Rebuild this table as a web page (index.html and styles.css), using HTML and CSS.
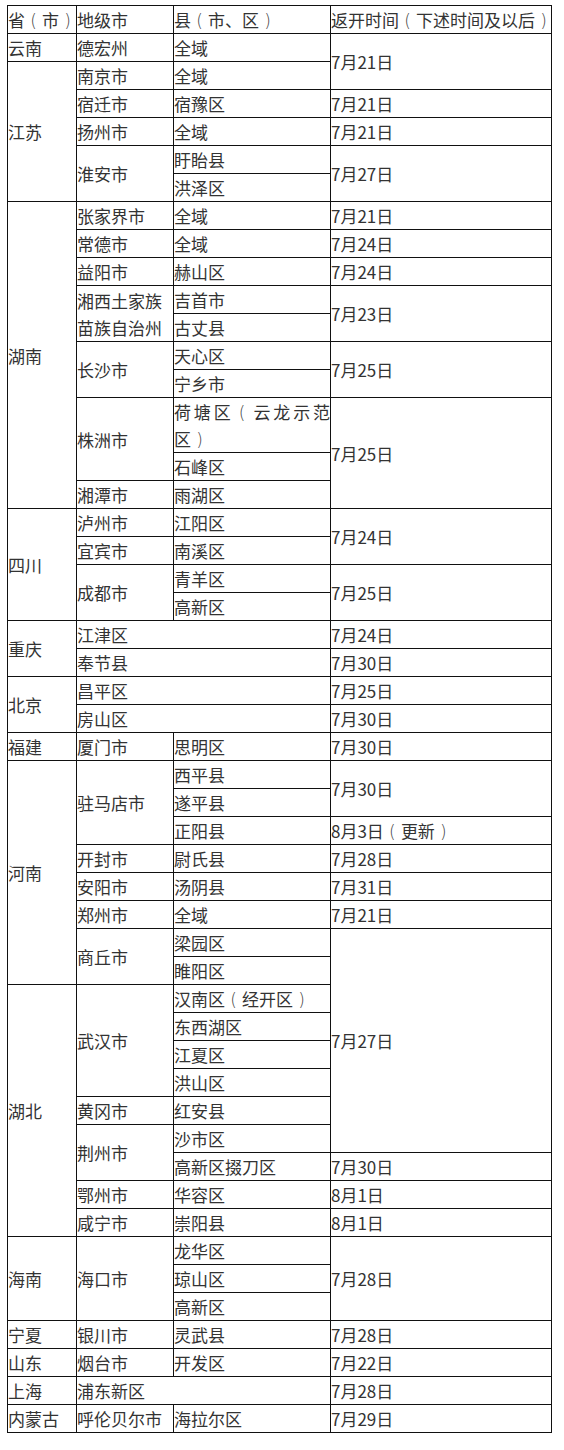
FILE: index.html
```html
<!DOCTYPE html>
<html lang="zh-CN">
<head>
<meta charset="utf-8">
<title>返开时间</title>
<link rel="stylesheet" href="styles.css">
</head>
<body>
<table class="sched">
  <colgroup>
    <col class="c1"><col class="c2"><col class="c3"><col class="c4">
  </colgroup>
  <tbody>
    <tr class="head"><td>省<span class="pn">(</span>市<span class="pn">)</span></td><td>地级市</td><td>县<span class="pn">(</span>市、区<span class="pn">)</span></td><td class="nowrap">返开时间<span class="pn">(</span>下述时间及以后<span class="pn">)</span></td></tr>
    <tr><td>云南</td><td>德宏州</td><td>全域</td><td rowspan="2">7月21日</td></tr>
    <tr><td rowspan="5">江苏</td><td>南京市</td><td>全域</td></tr>
    <tr><td>宿迁市</td><td>宿豫区</td><td>7月21日</td></tr>
    <tr><td>扬州市</td><td>全域</td><td>7月21日</td></tr>
    <tr><td rowspan="2">淮安市</td><td>盱眙县</td><td rowspan="2">7月27日</td></tr>
    <tr><td>洪泽区</td></tr>
    <tr><td rowspan="10">湖南</td><td>张家界市</td><td>全域</td><td>7月21日</td></tr>
    <tr><td>常德市</td><td>全域</td><td>7月24日</td></tr>
    <tr><td>益阳市</td><td>赫山区</td><td>7月24日</td></tr>
    <tr><td rowspan="2">湘西土家族<br>苗族自治州</td><td>吉首市</td><td rowspan="2">7月23日</td></tr>
    <tr><td>古丈县</td></tr>
    <tr><td rowspan="2">长沙市</td><td>天心区</td><td rowspan="2">7月25日</td></tr>
    <tr><td>宁乡市</td></tr>
    <tr><td rowspan="2">株洲市</td><td>荷塘区<span class="pn">(</span>云龙示范<span class="nowrap">区<span class="pn">)</span></span></td><td rowspan="3">7月25日</td></tr>
    <tr><td>石峰区</td></tr>
    <tr><td>湘潭市</td><td>雨湖区</td></tr>
    <tr><td rowspan="4">四川</td><td>泸州市</td><td>江阳区</td><td rowspan="2">7月24日</td></tr>
    <tr><td>宜宾市</td><td>南溪区</td></tr>
    <tr><td rowspan="2">成都市</td><td>青羊区</td><td rowspan="2">7月25日</td></tr>
    <tr><td>高新区</td></tr>
    <tr><td rowspan="2">重庆</td><td colspan="2">江津区</td><td>7月24日</td></tr>
    <tr><td colspan="2">奉节县</td><td>7月30日</td></tr>
    <tr><td rowspan="2">北京</td><td colspan="2">昌平区</td><td>7月25日</td></tr>
    <tr><td colspan="2">房山区</td><td>7月30日</td></tr>
    <tr><td>福建</td><td>厦门市</td><td>思明区</td><td>7月30日</td></tr>
    <tr><td rowspan="8">河南</td><td rowspan="3">驻马店市</td><td>西平县</td><td rowspan="2">7月30日</td></tr>
    <tr><td>遂平县</td></tr>
    <tr><td>正阳县</td><td>8月3日<span class="pn">(</span>更新<span class="pn">)</span></td></tr>
    <tr><td>开封市</td><td>尉氏县</td><td>7月28日</td></tr>
    <tr><td>安阳市</td><td>汤阴县</td><td>7月31日</td></tr>
    <tr><td>郑州市</td><td>全域</td><td>7月21日</td></tr>
    <tr><td rowspan="2">商丘市</td><td>梁园区</td><td rowspan="8">7月27日</td></tr>
    <tr><td>睢阳区</td></tr>
    <tr><td rowspan="9">湖北</td><td rowspan="4">武汉市</td><td>汉南区<span class="pn">(</span>经开区<span class="pn">)</span></td></tr>
    <tr><td>东西湖区</td></tr>
    <tr><td>江夏区</td></tr>
    <tr><td>洪山区</td></tr>
    <tr><td>黄冈市</td><td>红安县</td></tr>
    <tr><td rowspan="2">荆州市</td><td>沙市区</td></tr>
    <tr><td>高新区掇刀区</td><td>7月30日</td></tr>
    <tr><td>鄂州市</td><td>华容区</td><td>8月1日</td></tr>
    <tr><td>咸宁市</td><td>崇阳县</td><td>8月1日</td></tr>
    <tr><td rowspan="3">海南</td><td rowspan="3">海口市</td><td>龙华区</td><td rowspan="3">7月28日</td></tr>
    <tr><td>琼山区</td></tr>
    <tr><td>高新区</td></tr>
    <tr><td>宁夏</td><td>银川市</td><td>灵武县</td><td>7月28日</td></tr>
    <tr><td>山东</td><td>烟台市</td><td>开发区</td><td>7月22日</td></tr>
    <tr><td>上海</td><td colspan="2">浦东新区</td><td>7月28日</td></tr>
    <tr><td>内蒙古</td><td>呼伦贝尔市</td><td>海拉尔区</td><td>7月29日</td></tr>
  </tbody>
</table>
</body>
</html>
```

FILE: styles.css
```css
html, body {
  margin: 0;
  padding: 0;
  background: #ffffff;
}

body {
  padding: 5px 0 0 7px;
  font-family: "Noto Sans CJK SC", "Noto Sans", sans-serif;
  color: #333333;
}

.sched {
  border-collapse: collapse;
  table-layout: fixed;
  width: 545px;
}

.c1 { width: 69px; }
.c2 { width: 97px; }
.c3 { width: 157px; }
.c4 { width: 221px; }

.sched td {
  border: 1px solid #111111;
  padding: 0;
  font-size: 17px;
  line-height: 27px;
  text-align: justify;
  vertical-align: middle;
  word-break: normal;
  line-break: strict;
}

.sched td.nowrap,
.nowrap {
  white-space: nowrap;
}

.pn {
  display: inline-block;
  width: 1em;
  line-height: 1;
  vertical-align: baseline;
  text-align: center;
  font-family: "DejaVu Sans", "Noto Sans", sans-serif;
  font-weight: 300;
  color: #444444;
}
```
